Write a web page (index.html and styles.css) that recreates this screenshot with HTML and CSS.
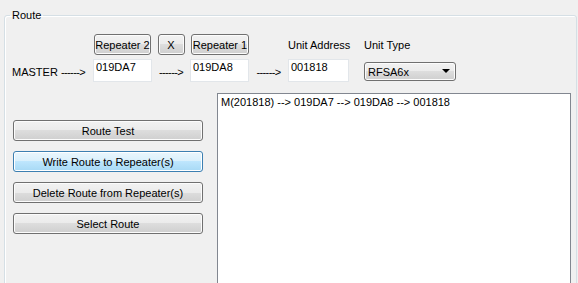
FILE: index.html
```html
<!DOCTYPE html>
<html lang="en">
<head>
    <meta charset="UTF-8">
    <meta name="viewport" content="width=device-width, initial-scale=1.0">
    <title>Route</title>
    <link rel="stylesheet" href="styles.css">
</head>
<body>

<fieldset class="group">
    <legend>Route</legend>

    <!-- Path: master -> repeaters -> unit -->
    <div class="path">
        <button type="button" class="btn rep2">Repeater 2</button>
        <button type="button" class="btn swap">X</button>
        <button type="button" class="btn rep1">Repeater 1</button>
        <label class="caption addr-label" for="unitAddress">Unit Address</label>
        <label class="caption" for="unitType">Unit Type</label>

        <span class="arrow master">MASTER <span class="dashes">------&gt;</span></span>
        <input type="text" class="textbox" id="rep2" value="019DA7">
        <span class="arrow"><span class="dashes">------&gt;</span></span>
        <input type="text" class="textbox" id="rep1" value="019DA8">
        <span class="arrow"><span class="dashes">------&gt;</span></span>
        <input type="text" class="textbox addr" id="unitAddress" value="001818">
        <div class="combo">
            <select id="unitType">
                <option>RFSA6x</option>
            </select>
        </div>
    </div>

    <div class="route-body">
        <div class="actions">
            <button type="button" class="btn wide">Route Test</button>
            <button type="button" class="btn wide focused">Write Route to Repeater(s)</button>
            <button type="button" class="btn wide">Delete Route from Repeater(s)</button>
            <button type="button" class="btn wide">Select Route</button>
        </div>
        <div class="listbox">
            <div class="list-item">M(201818) --&gt; 019DA7 --&gt; 019DA8 --&gt; 001818</div>
        </div>
    </div>
</fieldset>

</body>
</html>
```

FILE: styles.css
```css
body {
    margin: 0;
    background: #f0f0f0;
    font-family: "Liberation Sans", Arial, sans-serif;
    font-size: 11px;
    color: #000;
    overflow: hidden;
}
.group {
    margin: 9px 1px 0 4px;
    padding: 12px 5px 0 5px;
    border: 1px solid #d5dfe5;
    border-radius: 3px;
    box-shadow: inset 1px 1px 0 #fff;
    height: 320px;
}
.group legend {
    padding: 0 2px;
    line-height: 13px;
}
.path {
    display: grid;
    grid-template-columns: 83px 59px 38px 59px 39px 76px 92px;
    grid-template-rows: 22px 23px;
    row-gap: 3px;
}
.btn {
    font-family: inherit;
    font-size: 11px;
    color: #000;
    height: 21px;
    padding: 0;
    white-space: nowrap;
    border: 1px solid #707070;
    border-radius: 3px;
    background: linear-gradient(#f2f2f2 0%, #ebebeb 50%, #dddddd 50%, #cfcfcf 100%);
    box-shadow: inset 0 0 0 1px #fcfcfc;
}
.btn.focused {
    border-color: #3c7fb1;
    background: linear-gradient(#eaf6fd 0%, #d9f0fc 50%, #bee6fd 50%, #a7d9f5 100%);
    box-shadow: inset 0 0 0 1px #fff;
}
.rep2 {
    grid-column: 2;
    width: 57px;
    margin-left: 1px;
}
.swap {
    width: 27px;
    justify-self: center;
}
.rep1 {
    width: 58px;
    margin-left: 1px;
}
.caption {
    align-self: center;
    line-height: 13px;
    white-space: nowrap;
}
.addr-label {
    grid-column: 6;
}
.arrow {
    align-self: end;
    margin-bottom: 3px;
    line-height: 13px;
    text-align: center;
    white-space: nowrap;
}
.arrow.master {
    text-align: left;
    padding-left: 2px;
}
.dashes {
    letter-spacing: -0.6px;
}
.textbox {
    box-sizing: border-box;
    width: 59px;
    height: 23px;
    margin: 0;
    padding: 0 2px 8px;
    font-family: inherit;
    font-size: 11px;
    border: 1px solid #e2e6ea;
    background: #fff;
    outline: none;
}
.textbox.addr {
    width: 61px;
}
.combo {
    position: relative;
    width: 92px;
    height: 19px;
    margin-top: 3px;
}
.combo select {
    appearance: none;
    box-sizing: border-box;
    width: 100%;
    height: 19px;
    margin: 0;
    padding: 0 0 0 3px;
    font-family: inherit;
    font-size: 11px;
    color: #000;
    border: 1px solid #707070;
    border-radius: 3px;
    background: linear-gradient(#f2f2f2 0%, #ebebeb 50%, #dddddd 50%, #cfcfcf 100%);
    box-shadow: inset 0 0 0 1px #fcfcfc;
}
.combo::after {
    content: "";
    position: absolute;
    right: 6px;
    top: 7px;
    border-left: 4px solid transparent;
    border-right: 4px solid transparent;
    border-top: 4px solid #000;
    pointer-events: none;
}
.route-body {
    display: flex;
    margin-top: 11px;
}
.actions {
    display: flex;
    flex-direction: column;
    gap: 10px;
    margin: 27px 0 0 3px;
    width: 190px;
}
.btn.wide {
    width: 190px;
}
.listbox {
    flex: 1;
    margin-left: 14px;
    height: 220px;
    padding: 2px 3px;
    background: #fff;
    border: 1px solid #828790;
}
.list-item {
    line-height: 13px;
    white-space: nowrap;
}
```
